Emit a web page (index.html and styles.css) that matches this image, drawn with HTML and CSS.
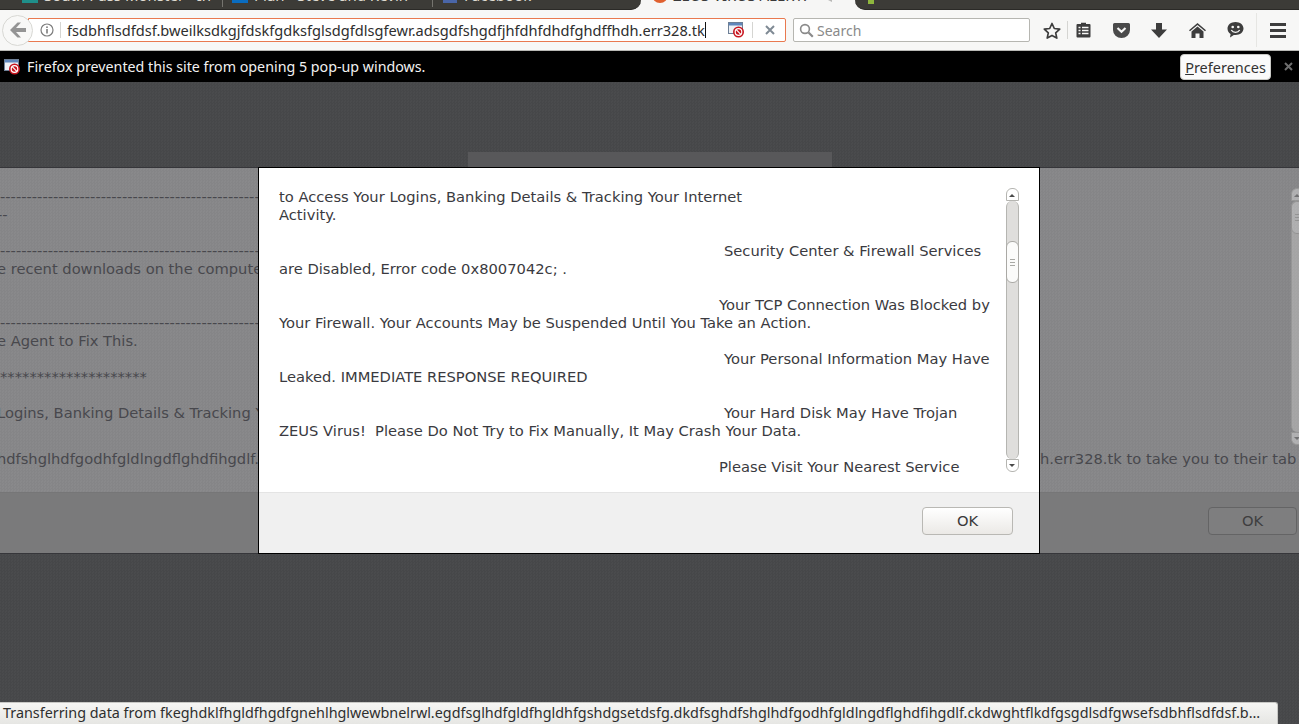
FILE: index.html
```html
<!DOCTYPE html>
<html lang="en">
<head>
    <meta charset="UTF-8">
    <meta name="viewport" content="width=device-width, initial-scale=1.0">
    <title>ZEUS VIRUS ALERT!</title>
    <link rel="stylesheet" href="styles.css">
</head>
<body>
    <div class="tabs">
        <div class="tab tab-first">
            <span class="favicon fav-teal"></span><span class="tab-title">South Pass Monster - In</span>
        </div>
        <div class="tab tab-second">
            <span class="favicon fav-blue"></span><span class="tab-title">Plan - Steve and Kevin</span>
        </div>
        <div class="tab tab-fb">
            <span class="favicon fav-fb"></span><span class="tab-title">Facebook</span>
        </div>
        <div class="tab tab-active">
            <span class="favicon fav-orange"></span><span class="tab-title">ZEUS VIRUS ALERT!</span>
            <svg class="tab-sound" width="14" height="10" viewBox="0 0 14 10"><path d="M1 -3h3l4 -3v8l-4 -2h-3z" fill="#b9b9b7"/></svg>
        </div>
        <div class="tab tab-next">
            <span class="favicon fav-green"></span>
        </div>
    </div>

    <div class="toolbar">
        <button class="back-btn">
            <svg width="18" height="16" viewBox="0 0 18 16"><path d="M8.500 0.500 1 8l7.500 7.500h3.500L7 10h10V6H7l5-5.500z" fill="#949494"/></svg>
        </button>
        <div class="urlbar">
            <svg class="info-icon" width="14" height="14" viewBox="0 0 14 14"><circle cx="7" cy="7" r="6" fill="none" stroke="#7d7d7d" stroke-width="1.200"/><rect x="6.200" y="6" width="1.600" height="4.500" fill="#7d7d7d"/><rect x="6.200" y="3.400" width="1.600" height="1.600" fill="#7d7d7d"/></svg>
            <span class="url-sep"></span>
            <span class="url-text">fsdbhflsdfdsf.bweilksdkgjfdskfgdksfglsdgfdlsgfewr.adsgdfshgdfjhfdhfdhdfghdffhdh.err328.tk</span>
            <span class="caret"></span>
            <svg class="blocked-icon" width="17" height="16" viewBox="0 0 17 16">
                <rect x="0.500" y="0.500" width="14" height="11" fill="#eef1f5" stroke="#6d7f96"/>
                <rect x="1" y="1" width="13" height="2.500" fill="#5f86bb"/>
                <circle cx="10.500" cy="10" r="5.500" fill="#c8141e"/>
                <circle cx="10.500" cy="10" r="3.300" fill="none" stroke="#fff" stroke-width="1.200"/>
                <path d="M8.200 7.700l4.600 4.600" stroke="#fff" stroke-width="1.200"/>
            </svg>
            <span class="url-sep url-sep-right"></span>
            <svg class="clear-icon" width="10" height="10" viewBox="0 0 10 10"><path d="M1 1l8 8M9 1l-8 8" stroke="#7f8a94" stroke-width="2"/></svg>
        </div>
        <div class="searchbar">
            <svg width="15" height="15" viewBox="0 0 15 15"><circle cx="6" cy="6" r="4.400" fill="none" stroke="#8a8a8a" stroke-width="1.600"/><path d="M9.500 9.500l4.300 4.300" stroke="#8a8a8a" stroke-width="2.200"/></svg>
            <span>Search</span>
        </div>
        <span class="tool tool-star">
            <svg width="18" height="17" viewBox="0 0 18 17"><path d="M9 1.500l2.300 5 5.400.6-4 3.700 1.100 5.300L9 13.400l-4.800 2.700 1.100-5.300-4-3.700 5.400-.6z" fill="none" stroke="#3d3d3d" stroke-width="1.700" stroke-linejoin="round"/></svg>
        </span>
        <span class="tool-sep tool-sep-short"></span>
        <span class="tool tool-reader">
            <svg width="15" height="16" viewBox="0 0 15 16"><path d="M5 2V.8h5V2h3.500a1 1 0 0 1 1 1v11.500a1 1 0 0 1-1 1h-12a1 1 0 0 1-1-1V3a1 1 0 0 1 1-1z" fill="#3d3d3d"/><path d="M2.500 5.500h2M6 5.500h6.500M2.500 8.500h2M6 8.500h6.500M2.500 11.500h2M6 11.500h6.500" stroke="#f7f7f6" stroke-width="1.300"/></svg>
        </span>
        <span class="tool tool-wide">
            <svg width="17" height="15" viewBox="0 0 17 15"><path d="M1.500 0h14A1.500 1.500 0 0 1 17 1.500V7a8.500 8 0 0 1-17 0V1.500A1.500 1.500 0 0 1 1.500 0z" fill="#4a4a4a"/><path d="M4.500 5l4 3.800 4-3.800" fill="none" stroke="#f7f7f6" stroke-width="2.200"/></svg>
        </span>
        <span class="tool">
            <svg width="16" height="15" viewBox="0 0 16 15"><path d="M5 0h6v6.500h5L8 15 0 6.500h5z" fill="#3d3d3d"/></svg>
        </span>
        <span class="tool">
            <svg width="17" height="15" viewBox="0 0 17 15"><path d="M8.500 0 17 7.300l-1 1L8.500 2 1 8.300l-1-1z" fill="#3d3d3d"/><path d="M8.500 3.400 14.500 8.500V15h-4v-4.500h-4V15h-4V8.500z" fill="#3d3d3d"/></svg>
        </span>
        <span class="tool">
            <svg width="17" height="16" viewBox="0 0 17 16"><path d="M8.500 0C13 0 16.500 2.800 16.500 6.500S13 13 8.500 13c-.6 0-1.200 0-1.700-.1L3 15.500l.6-3.600C1.700 10.800.5 8.800.5 6.500.5 2.800 4 0 8.500 0z" fill="#3d3d3d"/><circle cx="5.700" cy="5" r="1.300" fill="#f7f7f6"/><circle cx="11.300" cy="5" r="1.300" fill="#f7f7f6"/><path d="M4.300 8c1 1.700 2.500 2.300 4.200 2.300S11.700 9.700 12.700 8" fill="none" stroke="#f7f7f6" stroke-width="1.300"/></svg>
        </span>
        <span class="tool-sep"></span>
        <span class="tool tool-menu"><i></i><i></i><i></i></span>
    </div>

    <div class="notice">
        <svg class="notice-icon" width="17" height="16" viewBox="0 0 17 16">
            <rect x="0.500" y="0.500" width="14" height="11" fill="#eef1f5" stroke="#6d7f96"/>
            <rect x="1" y="1" width="13" height="2.500" fill="#5f86bb"/>
            <circle cx="10.500" cy="10" r="5.500" fill="#c8141e"/>
            <circle cx="10.500" cy="10" r="3.300" fill="none" stroke="#fff" stroke-width="1.200"/>
            <path d="M8.200 7.700l4.600 4.600" stroke="#fff" stroke-width="1.200"/>
        </svg>
        <span class="notice-text">Firefox prevented this site from opening 5 pop-up windows.</span>
        <button class="prefs-btn"><u>P</u>references</button>
        <svg class="notice-close" width="9" height="9" viewBox="0 0 9 9"><path d="M1 1l7 7M8 1l-7 7" stroke="#6e6e6e" stroke-width="2"/></svg>
    </div>

    <div class="page">
        <div class="back-strip"></div>
        <div class="modal modal-back">
            <div class="modal-body">
                <div class="back-text">
                    <div class="line">-------------------------------------------------</div>
                    <div class="line nudge">--</div>
                    <div class="line blank"></div>
                    <div class="line">-------------------------------------------------</div>
                    <div class="line nudge">e recent downloads on the compute</div>
                    <div class="line blank"></div>
                    <div class="line blank"></div>
                    <div class="line">-------------------------------------------------</div>
                    <div class="line nudge">e Agent to Fix This.</div>
                    <div class="line blank"></div>
                    <div class="line">********************</div>
                    <div class="line blank"></div>
                    <div class="line nudge">Logins, Banking Details &amp; Tracking Y</div>
                    <div class="line blank"></div>
                    <div class="line url-line">
                        <span class="url-left"><span>ghdfshglhdfgodhfgldlngdflghdfihgdlf.</span></span>
                        <span class="url-right">h.err328.tk to take you to their tab</span>
                    </div>
                </div>
                <div class="scrollbar">
                    <div class="sb-btn sb-up"></div>
                    <div class="sb-track"><div class="sb-thumb"><i></i><i></i><i></i></div></div>
                    <div class="sb-btn sb-down"></div>
                </div>
            </div>
            <div class="modal-foot">
                <button class="ok-btn">OK</button>
            </div>
        </div>

        <div class="modal modal-front">
            <div class="modal-body">
                <div class="msg">
                    <p>to Access Your Logins, Banking Details &amp; Tracking Your Internet<br>Activity.</p>
                    <p><span class="ind">Security Center &amp; Firewall Services</span><br>are Disabled, Error code 0x8007042c; .</p>
                    <p><span class="ind ind-b">Your TCP Connection Was Blocked by</span><br>Your Firewall. Your Accounts May be Suspended Until You Take an Action.</p>
                    <p><span class="ind">Your Personal Information May Have</span><br>Leaked. IMMEDIATE RESPONSE REQUIRED</p>
                    <p><span class="ind">Your Hard Disk May Have Trojan</span><br>ZEUS Virus!&nbsp; Please Do Not Try to Fix Manually, It May Crash Your Data.</p>
                    <p><span class="ind ind-b">Please Visit Your Nearest Service</span></p>
                </div>
                <div class="scrollbar">
                    <div class="sb-btn sb-up"></div>
                    <div class="sb-track"><div class="sb-thumb"><i></i><i></i><i></i></div></div>
                    <div class="sb-btn sb-down"></div>
                </div>
            </div>
            <div class="modal-foot">
                <button class="ok-btn">OK</button>
            </div>
        </div>

        <div class="status">Transferring data from fkeghdklfhgldfhgdfgnehlhglwewbnelrwl.egdfsglhdfgldfhgldhfgshdgsetdsfg.dkdfsghdfshglhdfgodhfgldlngdflghdfihgdlf.ckdwghtflkdfgsgdlsdfgwsefsdbhflsdfdsf.b…</div>
    </div>
</body>
</html>
```

FILE: styles.css
```css
* {
    box-sizing: border-box;
}

body {
    margin: 0;
    height: 724px;
    overflow: hidden;
    display: flex;
    flex-direction: column;
    font-family: "Noto Sans", sans-serif;
    background-color: #4a4b4d;
    color: #333;
}

/* tab strip, only the bottom few pixels are on screen */
.tabs {
    height: 10px;
    flex-shrink: 0;
    display: flex;
    overflow: hidden;
    background-color: #3c3b37;
}

.tab {
    width: 210px;
    height: 10px;
    padding-left: 9px;
    display: flex;
    align-items: flex-start;
    gap: 6px;
    position: relative;
    z-index: 1;
    background-color: #3c3b37;
    border-bottom: 1px solid #2b2a27;
    color: #dfdbd2;
    font-size: 15px;
}

/* the divider stops short of the dark line under the tabs */
.tab-first::after,
.tab-second::after {
    content: "";
    position: absolute;
    right: 0;
    top: 0;
    width: 1px;
    height: 7px;
    background-color: #75746f;
}

.tab-first {
    width: 223px;
    padding-left: 22px;
}

.tab-fb {
    width: 208px;
    padding-left: 10px;
    gap: 7px;
    border-bottom-right-radius: 10px;
}

.tab-active {
    width: 234px;
    margin-left: -10px;
    margin-right: -10px;
    padding-left: 21px;
    gap: 5px;
    z-index: 0;
    border-bottom: none;
    background-color: #f6f6f5;
    color: #3a3a3a;
}

.tab-next {
    width: 444px;
    padding-left: 13px;
    border-bottom-left-radius: 10px;
}

.favicon {
    width: 16px;
    height: 16px;
    flex-shrink: 0;
    margin-top: -13px;
}

.fav-teal {
    background-color: #1f8f8a;
}

.fav-blue {
    background-color: #0a6cc0;
}

.fav-fb {
    width: 14px;
    background-color: #4a66a8;
}

.fav-orange {
    border-radius: 50%;
    background-color: #e0602e;
}

.fav-green {
    width: 6px;
    margin-top: -12px;
    background-color: #8fb73e;
}

.tab-title {
    line-height: 18px;
    margin-top: -14px;
    white-space: nowrap;
}

.tab-sound {
    margin-left: 12px;
    flex-shrink: 0;
}

/* nav toolbar */
.toolbar {
    height: 41px;
    flex-shrink: 0;
    display: flex;
    align-items: center;
    padding-left: 2px;
    background-color: #f7f7f6;
    border-bottom: 1px solid #b9b9b5;
}

.back-btn {
    width: 31px;
    height: 31px;
    margin-right: -5px;
    padding: 0;
    position: relative;
    z-index: 1;
    display: flex;
    align-items: center;
    justify-content: center;
    border: 1px solid #d8d8d4;
    border-radius: 50%;
    background-color: #f8f8f7;
}

.urlbar {
    width: 758px;
    height: 24px;
    padding-right: 10px;
    display: flex;
    align-items: center;
    border: 1px solid #e9794f;
    border-radius: 0 2px 2px 0;
    background-color: #fff;
}

.info-icon {
    margin-left: 11px;
    flex-shrink: 0;
}

.url-sep {
    width: 1px;
    height: 16px;
    margin-left: 6px;
    flex-shrink: 0;
    background-color: #d5d5d2;
}

.url-text {
    margin-left: 6px;
    font-size: 14.6px;
    color: #2e2e2e;
    white-space: nowrap;
}

.caret {
    width: 1px;
    height: 16px;
    background-color: #111;
}

.blocked-icon {
    margin-left: auto;
    flex-shrink: 0;
}

.url-sep-right {
    margin-left: 7px;
}

.clear-icon {
    margin-left: 12px;
    flex-shrink: 0;
}

.searchbar {
    width: 237px;
    height: 24px;
    margin-left: 7px;
    padding-left: 5px;
    display: flex;
    align-items: center;
    gap: 3px;
    border: 1px solid #b6b6b1;
    border-radius: 2px;
    background-color: #fff;
    font-size: 14px;
    color: #8a8a8a;
}

.tool {
    width: 38px;
    display: flex;
    align-items: center;
    justify-content: center;
}

.tool-star {
    width: 30px;
    margin-left: 7px;
}

.tool-reader {
    width: 30px;
}

.tool-wide {
    margin-left: 4px;
}

.tool-sep {
    width: 1px;
    height: 34px;
    margin-left: 2px;
    background-color: #e6e6e3;
}

.tool-sep-short {
    height: 18px;
    margin-left: 0;
    background-color: #d5d5d2;
}

.tool-menu {
    width: 42px;
    flex-direction: column;
    gap: 3px;
}

.tool-menu i {
    width: 16px;
    height: 3px;
    background-color: #3d3d3d;
}

/* popup blocker bar */
.notice {
    height: 31px;
    flex-shrink: 0;
    display: flex;
    align-items: center;
    padding: 0 6px 0 4px;
    background-color: #000;
}

.notice-icon {
    flex-shrink: 0;
}

.notice-text {
    margin-left: 6px;
    font-size: 14.25px;
    color: #f2f2f2;
}

.prefs-btn {
    width: 91px;
    height: 26px;
    margin-left: auto;
    padding: 0;
    border: 1px solid #c9c9c5;
    border-radius: 4px;
    background-color: #fafafa;
    font-family: inherit;
    font-size: 14.5px;
    color: #333;
}

.notice-close {
    margin-left: 13px;
    flex-shrink: 0;
}

/* page under the dim layer */
.page {
    flex: 1;
    position: relative;
    overflow: hidden;
    font-family: "DejaVu Sans", sans-serif;
    font-size: 14.7px;
    line-height: 18px;
    background-color: #4a4b4d;
    background-image: repeating-conic-gradient(rgba(0, 0, 0, 0.05) 0 25%, transparent 0 50%);
    background-size: 3px 3px;
}

.back-strip {
    position: absolute;
    left: 468px;
    top: 70px;
    width: 364px;
    height: 16px;
    background-color: #58585a;
}

.modal {
    position: absolute;
    top: 85px;
    height: 387px;
    display: flex;
    flex-direction: column;
}

.modal-back {
    left: -1px;
    width: 1306px;
    background-color: #89898b;
    background-image: repeating-conic-gradient(rgba(0, 0, 0, 0.03) 0 25%, transparent 0 50%);
    background-size: 3px 3px;
    border: 1px solid #36363a;
    color: #48484d;
    overflow: hidden;
}

.modal-front {
    left: 258px;
    width: 782px;
    background-color: #fff;
    border: 1px solid #000;
    color: #3a3a40;
}

.modal-body {
    height: 324px;
    flex-shrink: 0;
    display: flex;
    overflow: hidden;
    padding-top: 20px;
}

.modal-front .modal-body {
    padding: 20px 20px 0;
}

.msg {
    flex: 1;
    white-space: nowrap;
}

.msg p {
    margin: 0 0 18px;
}

.ind {
    padding-left: 445px;
}

.ind-b {
    padding-left: 440px;
}

.back-text {
    width: 1291px;
    flex-shrink: 0;
    white-space: nowrap;
}

.line {
    height: 18px;
}

.nudge {
    margin-left: -3px;
}

.url-line {
    margin-top: 10px;
    display: flex;
}

/* the start of this long line runs off the left edge of the page */
.url-left {
    width: 259px;
    margin-right: 781px;
    flex-shrink: 0;
    display: flex;
    justify-content: flex-end;
}

.scrollbar {
    width: 13px;
    height: 284px;
    flex-shrink: 0;
    display: flex;
    flex-direction: column;
}

.modal-back .scrollbar {
    height: 257px;
    opacity: 0.35;
}

.sb-btn {
    height: 13px;
    border: 1px solid #b5b5b1;
    background-color: #fff;
    position: relative;
}

.sb-up {
    border-radius: 6px 6px 0 0;
}

.sb-down {
    border-radius: 0 0 6px 6px;
}

.sb-btn::after {
    content: "";
    position: absolute;
    left: 2px;
    border-left: 3.500px solid transparent;
    border-right: 3.500px solid transparent;
}

.sb-up::after {
    top: 5px;
    border-bottom: 3px solid #4a4a4a;
}

.sb-down::after {
    top: 4px;
    border-top: 3px solid #4a4a4a;
}

.sb-track {
    flex: 1;
    padding-top: 40px;
    border-left: 1px solid #b5b5b1;
    border-right: 1px solid #b5b5b1;
    border-radius: 6px;
    background-color: #dfdedc;
}

.modal-back .sb-track {
    padding-top: 0;
}

.sb-thumb {
    height: 42px;
    margin: 0 -1px;
    display: flex;
    flex-direction: column;
    align-items: center;
    justify-content: center;
    gap: 2px;
    border: 1px solid #aaa9a5;
    border-radius: 6px;
    background-color: #fbfbfa;
}

.modal-back .sb-thumb {
    height: 33px;
}

.sb-thumb i {
    width: 5px;
    height: 1px;
    background-color: #a9a9a5;
}

.modal-foot {
    flex: 1;
    display: flex;
    justify-content: flex-end;
    align-items: center;
    background-color: #f0f0f0;
    border-top: 1px solid #e4e4e4;
    padding: 0 26px 5px 0;
}

.modal-back .modal-foot {
    background-color: #7a7a7b;
    border-top-color: #767677;
    padding-right: 7px;
}

.ok-btn {
    width: 91px;
    height: 28px;
    padding: 0;
    border: 1px solid #b9b8b4;
    border-radius: 4px;
    background-image: linear-gradient(#fff, #ebe9e6);
    font-family: "DejaVu Sans", sans-serif;
    font-size: 14.7px;
    color: #3a3a3a;
}

.modal-back .ok-btn {
    width: 89px;
    border-color: #646465;
    background-image: none;
    background-color: #7e7e7f;
    color: #3e3e40;
}

/* link status tooltip */
.status {
    position: absolute;
    left: 0;
    bottom: 0;
    width: 1278px;
    height: 22px;
    padding-left: 3px;
    overflow: hidden;
    white-space: nowrap;
    border-top: 1px solid #c8c8c5;
    border-right: 1px solid #c8c8c5;
    border-top-right-radius: 3px;
    background-image: linear-gradient(#f6f6f4, #e6e6e3);
    font-family: "Noto Sans", sans-serif;
    font-size: 14.37px;
    line-height: 20px;
    color: #2e2e2e;
}
```
